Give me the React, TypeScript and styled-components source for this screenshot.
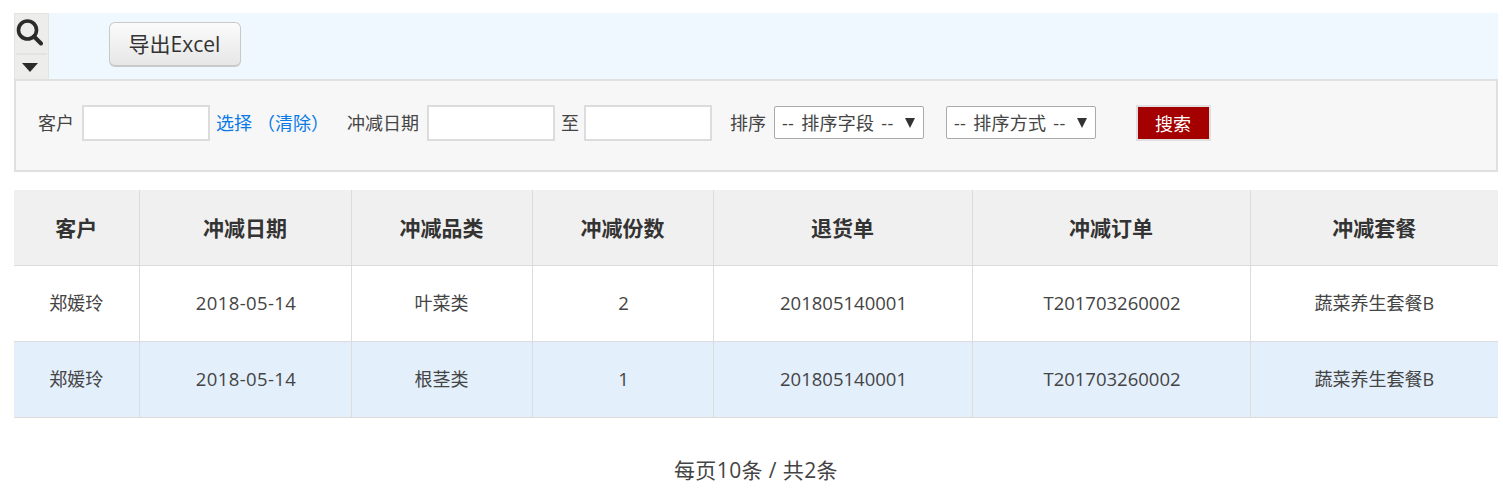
import React, { FC } from "react";
import styled, { createGlobalStyle } from "styled-components";

const FONT = `"Open Sans", "Noto Sans CJK SC", sans-serif`;

const GlobalStyle = createGlobalStyle`
  html, body {
    margin: 0;
    padding: 0;
    background: #fff;
    font-family: ${FONT};
    color: #333;
  }
`;

const Page = styled.div`
  padding: 13px 5px 0 14px;
`;

const Toolbar = styled.div`
  display: flex;
  height: 66px;
  background: #eff7ff;
`;

const ToggleColumn = styled.div`
  width: 35px;
  background: #ededeb;
  display: flex;
  flex-direction: column;
  border: 1px solid #e3e3e1;
  border-bottom: none;
  box-sizing: border-box;
`;

const SearchToggle = styled.div`
  height: 39px;
  display: flex;
  align-items: center;
  justify-content: center;
  border-bottom: 2px solid #e3e3e1;
  margin: 0 1px;
`;

const CaretToggle = styled.div`
  flex: 1;
  display: flex;
  align-items: center;
  justify-content: center;
`;

const ExportButton = styled.button`
  margin: 9px 0 0 60px;
  width: 132px;
  height: 45px;
  border: 1px solid #c9c9c9;
  border-bottom-width: 2px;
  border-radius: 6px;
  background: linear-gradient(#fbfbfb, #e6e6e6);
  font-family: ${FONT};
  font-size: 21px;
  color: #333;
  padding: 0 1px 2px 0;
`;

const FilterPanel = styled.div`
  height: 93px;
  box-sizing: border-box;
  background: #f7f7f7;
  border: 2px solid #e0e0e0;
  padding: 24px 0 0 22px;
  display: flex;
  align-items: flex-start;
  font-size: 18px;
`;

const Label = styled.span<{ $left?: number; $right?: number }>`
  line-height: 36px;
  margin-left: ${(p) => p.$left ?? 0}px;
  margin-right: ${(p) => p.$right ?? 0}px;
  color: #444;
`;

const TextInput = styled.input`
  width: 128px;
  height: 36px;
  box-sizing: border-box;
  border: 2px solid #dcdcdc;
  background: #fff;
  padding: 0;
`;

const LinkText = styled.a<{ $left?: number }>`
  line-height: 36px;
  margin-left: ${(p) => p.$left ?? 0}px;
  color: #0a7ae8;
`;

const SelectBox = styled.div<{ $width: number; $left?: number }>`
  position: relative;
  width: ${(p) => p.$width}px;
  margin: 1px 0 0 ${(p) => p.$left ?? 0}px;
`;

const Select = styled.select`
  appearance: none;
  width: 100%;
  height: 33px;
  box-sizing: border-box;
  border: 1px solid #aaa;
  border-radius: 2px;
  background: #fff;
  padding: 0 0 0 7px;
  font-family: ${FONT};
  font-size: 18px;
  letter-spacing: 0.3px;
  word-spacing: 2px;
  color: #444;
`;

const SelectArrow = styled.span`
  position: absolute;
  right: 9px;
  top: 12px;
  width: 0;
  height: 0;
  border-left: 5px solid transparent;
  border-right: 5px solid transparent;
  border-top: 10px solid #333;
  pointer-events: none;
`;

const SearchButton = styled.button`
  margin-left: 40px;
  width: 75px;
  height: 36px;
  box-sizing: border-box;
  border: 2px solid #e0e0e0;
  background: #a40000;
  color: #fff;
  font-family: ${FONT};
  font-size: 18px;
  padding: 0 1px 0 0;
`;

const Table = styled.table`
  width: 1484px;
  margin-top: 18px;
  border-collapse: collapse;
  table-layout: fixed;
`;

const HeadCell = styled.th<{ $width: number }>`
  width: ${(p) => p.$width}px;
  box-sizing: border-box;
  height: 75px;
  padding: 0;
  background: #f0f0f0;
  border-bottom: 1px solid #dcdcdc;
  border-left: 1px solid #dcdcdc;
  font-size: 21px;
  font-weight: 700;
  color: #333;
  &:first-child {
    border-left: none;
  }
`;

const Row = styled.tr<{ $striped: boolean }>`
  background: ${(p) => (p.$striped ? "#e3effb" : "#fff")};
`;

const Cell = styled.td<{ $numeric?: boolean; $tracking?: number }>`
  height: 73px;
  padding: 0 0 2px ${(p) => (p.$numeric ? 2 : 0)}px;
  text-align: center;
  border-bottom: 1px solid #dcdcdc;
  border-left: 1px solid #dcdcdc;
  font-size: ${(p) => (p.$numeric ? 18.5 : 18)}px;
  letter-spacing: ${(p) => p.$tracking ?? 0}px;
  color: #444;
  &:first-child {
    border-left: none;
  }
`;

const Pagination = styled.div`
  margin-top: 38px;
  text-align: center;
  font-size: 21px;
  letter-spacing: 0.4px;
  line-height: 28px;
  color: #444;
`;

const columns = [
  { title: "客户", width: 125 },
  { title: "冲减日期", width: 212 },
  { title: "冲减品类", width: 181 },
  { title: "冲减份数", width: 181 },
  { title: "退货单", width: 259 },
  { title: "冲减订单", width: 278 },
  { title: "冲减套餐", width: 248 },
];

const rows = [
  ["郑媛玲", "2018-05-14", "叶菜类", "2", "201805140001", "T201703260002", "蔬菜养生套餐B"],
  ["郑媛玲", "2018-05-14", "根茎类", "1", "201805140001", "T201703260002", "蔬菜养生套餐B"],
];

// columns that hold only digits, plus the date which runs a little wider
const numericColumns = [1, 3, 4, 5];

const App: FC = () => {
  return (
    <>
      <GlobalStyle />
      <Page>
        <Toolbar>
          <ToggleColumn>
            <SearchToggle>
              <svg width="28" height="28" viewBox="0 0 28 28" style={{ marginLeft: -6, marginTop: -3 }}>
                <circle cx="12.5" cy="12" r="9" fill="none" stroke="#2b2b2b" strokeWidth="3.6" />
                <path d="M19 18.5 L26 25.5" stroke="#2b2b2b" strokeWidth="4" strokeLinecap="round" />
              </svg>
            </SearchToggle>
            <CaretToggle>
              <svg width="16" height="9" viewBox="0 0 16 9" style={{ marginLeft: -4 }}>
                <path d="M0 0 H16 L8 9 Z" fill="#2b2b2b" />
              </svg>
            </CaretToggle>
          </ToggleColumn>
          <ExportButton>导出Excel</ExportButton>
        </Toolbar>
        <FilterPanel>
          <Label $right={8}>客户</Label>
          <TextInput />
          <LinkText $left={6}>选择</LinkText>
          <LinkText $left={5}>（清除）</LinkText>
          <Label $left={18} $right={8}>冲减日期</Label>
          <TextInput />
          <Label $left={6} $right={5}>至</Label>
          <TextInput />
          <Label $left={18} $right={8}>排序</Label>
          <SelectBox $width={150}>
            <Select>
              <option>-- 排序字段 --</option>
            </Select>
            <SelectArrow />
          </SelectBox>
          <SelectBox $width={150} $left={22}>
            <Select>
              <option>-- 排序方式 --</option>
            </Select>
            <SelectArrow />
          </SelectBox>
          <SearchButton>搜索</SearchButton>
        </FilterPanel>
        <Table>
          <thead>
            <tr>
              {columns.map((col) => (
                <HeadCell key={col.title} $width={col.width}>
                  {col.title}
                </HeadCell>
              ))}
            </tr>
          </thead>
          <tbody>
            {rows.map((row, i) => (
              <Row key={i} $striped={i % 2 === 1}>
                {row.map((value, j) => (
                  <Cell
                    key={j}
                    $numeric={numericColumns.includes(j)}
                    $tracking={j === 1 ? 0.4 : 0}
                  >
                    {value}
                  </Cell>
                ))}
              </Row>
            ))}
          </tbody>
        </Table>
        <Pagination>每页10条 / 共2条</Pagination>
      </Page>
    </>
  );
};

export default App;
